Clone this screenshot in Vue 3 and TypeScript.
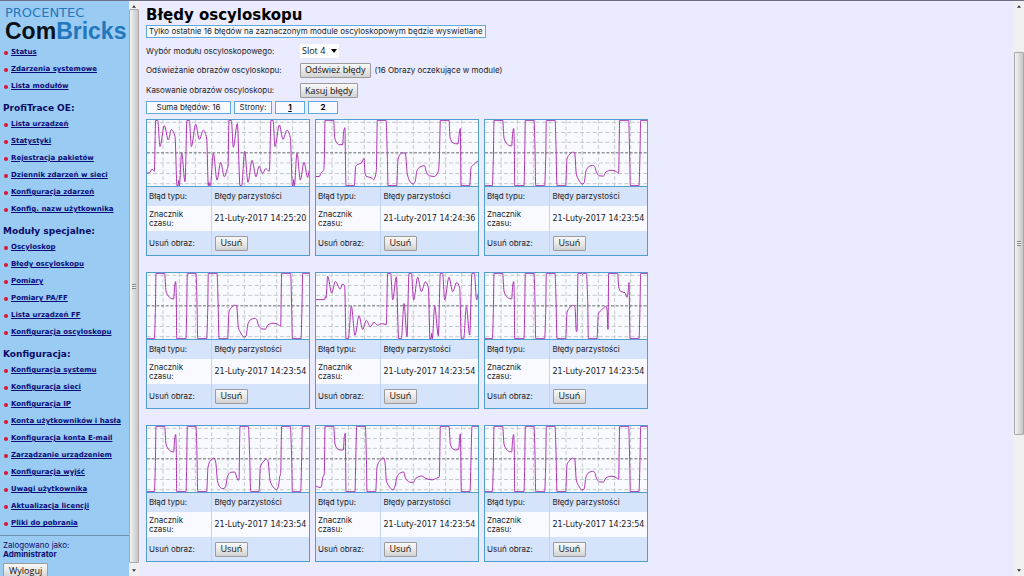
<script setup lang="ts">
import { ref } from 'vue'

type Point = [number, number]

interface Section {
  title: string
  links: string[]
}

interface Capture {
  time: string
  trace: Point[]
}

const sections: Section[] = [
  { title: '', links: ['Status', 'Zdarzenia systemowe', 'Lista modułów'] },
  {
    title: 'ProfiTrace OE:',
    links: ['Lista urządzeń', 'Statystyki', 'Rejestracja pakietów', 'Dziennik zdarzeń w sieci', 'Konfiguracja zdarzeń', 'Konfig. nazw użytkownika'],
  },
  {
    title: 'Moduły specjalne:',
    links: ['Oscyloskop', 'Błędy oscyloskopu', 'Pomiary', 'Pomiary PA/FF', 'Lista urządzeń FF', 'Konfiguracja oscyloskopu'],
  },
  {
    title: 'Konfiguracja:',
    links: ['Konfiguracja systemu', 'Konfiguracja sieci', 'Konfiguracja IP', 'Konta użytkowników i hasła', 'Konfiguracja konta E-mail', 'Zarządzanie urządzeniem', 'Konfiguracja wyjść', 'Uwagi użytkownika', 'Aktualizacja licencji', 'Pliki do pobrania'],
  },
]

const slot = ref('Slot 4')

// Trace samples: x runs 0..486, y runs 0 (top) .. 201 (bottom).
const ringing: Point[] = [
  [0, 161], [7, 161], [15, 150], [22, 156], [26, 1], [32, 1], [39, 81], [52, 17], [64, 61], [73, 29], [84, 50], [90, 200], [93, 200], [95, 184], [97, 200],
  [104, 100], [114, 188], [120, 1], [127, 1], [133, 81], [146, 13], [157, 59], [169, 31], [179, 55], [184, 200], [186, 190], [188, 200], [190, 200],
  [199, 101], [210, 183], [221, 129], [232, 173], [241, 148], [243, 140], [246, 1], [253, 1], [259, 83], [271, 11], [279, 200], [284, 200],
  [293, 95], [303, 190], [315, 123], [327, 173], [336, 141], [347, 163], [356, 148], [367, 156], [372, 1], [378, 1], [384, 81],
  [397, 15], [408, 59], [420, 31], [430, 53], [436, 200], [438, 200], [440, 182], [442, 200], [450, 101], [460, 183], [471, 129], [482, 175], [487, 153],
]

const stepped: Point[] = [
  [0, 172], [10, 172], [15, 161], [23, 154], [25, 120], [27, 1], [53, 1], [56, 53], [62, 69], [68, 75], [80, 75], [83, 35], [87, 23],
  [88, 100], [90, 200], [115, 200], [119, 142], [124, 136], [136, 131], [144, 117], [147, 160], [150, 171], [166, 176], [173, 182],
  [181, 154], [184, 1], [210, 1], [214, 110], [216, 200], [242, 200], [246, 120], [253, 104], [260, 100], [268, 101], [274, 165],
  [281, 186], [291, 195], [297, 189], [303, 154], [312, 143], [325, 139], [332, 161], [341, 170], [355, 172], [367, 156], [370, 120],
  [373, 1], [399, 1], [402, 53], [410, 69], [426, 73], [430, 40], [433, 26], [435, 200], [461, 200], [465, 145], [474, 135], [487, 125],
]

const opening: Point[] = [
  [0, 200], [22, 200], [25, 120], [27, 1], [53, 1], [57, 55], [64, 70], [73, 78], [80, 79], [83, 40], [86, 26], [88, 80], [89, 200],
  [117, 200], [119, 120], [121, 1], [147, 1], [150, 90], [152, 200],
]

const decaying: Point[] = [
  ...opening, [179, 200], [182, 120], [184, 1], [210, 1], [213, 80], [216, 200], [242, 200], [246, 118], [253, 106], [262, 98],
  [269, 100], [274, 165], [281, 182], [291, 195], [297, 193], [303, 155], [311, 142], [323, 138], [329, 141], [334, 158], [343, 170],
  [355, 171], [363, 158], [378, 153], [390, 155], [401, 162], [404, 1], [431, 1], [434, 110], [436, 200], [462, 200], [465, 100], [467, 1], [487, 1],
]

const burst: Point[] = [
  [0, 81], [26, 81], [28, 72], [30, 76], [35, 10], [47, 61], [58, 26], [73, 49], [79, 34], [86, 38], [90, 200], [97, 200],
  [106, 101], [117, 190], [129, 130], [140, 172], [151, 144], [163, 164], [174, 150], [185, 159], [197, 154], [211, 157], [215, 1], [224, 1],
  [230, 82], [241, 12], [248, 200], [256, 200], [264, 93], [273, 194], [279, 1], [286, 1], [293, 82], [305, 13], [316, 57], [328, 27],
  [337, 44], [342, 200], [345, 200], [347, 184], [349, 200], [356, 101], [367, 191], [373, 1], [380, 1], [386, 82], [399, 13], [410, 57], [422, 29],
  [431, 45], [436, 200], [443, 200], [451, 102], [461, 189], [468, 1], [475, 1], [482, 82], [487, 62],
]

const twinSpike: Point[] = [
  ...opening, [179, 200], [182, 120], [184, 1], [210, 1], [213, 80], [216, 200], [242, 200], [246, 120], [253, 107], [263, 98],
  [270, 104], [274, 178], [276, 178], [279, 1], [290, 1], [293, 5], [296, 1], [304, 1], [308, 80], [310, 200], [336, 200], [340, 125],
  [348, 114], [363, 102], [366, 110], [369, 172], [371, 1], [398, 1], [401, 42], [407, 56], [420, 60], [426, 74], [430, 50],
  [432, 29], [435, 200], [462, 200], [465, 100], [467, 1], [487, 1],
]

const doubleBump: Point[] = [
  ...opening, [179, 200], [183, 125], [190, 106], [201, 98], [206, 110], [212, 170], [218, 185], [227, 191], [235, 187],
  [242, 152], [251, 141], [263, 140], [269, 156], [273, 165], [276, 164], [279, 1], [304, 1], [308, 90], [311, 200], [336, 200],
  [340, 125], [348, 110], [358, 101], [363, 106], [369, 165], [376, 182], [389, 194], [395, 180], [398, 155], [401, 145],
  [404, 1], [430, 1], [434, 100], [436, 200], [461, 200], [464, 100], [466, 1], [487, 1],
]

const longTail: Point[] = [
  [0, 183], [9, 187], [16, 186], [20, 158], [25, 145], [27, 1], [53, 1], [57, 55], [64, 69], [72, 73], [82, 73], [85, 32], [88, 22],
  [90, 200], [117, 200], [119, 120], [122, 1], [148, 1], [151, 90], [153, 200], [179, 200], [183, 125], [190, 108], [203, 97],
  [207, 110], [211, 165], [218, 182], [231, 195], [237, 183], [243, 155], [252, 143], [263, 140], [269, 160], [281, 171],
  [291, 172], [300, 159], [317, 152], [330, 160], [348, 164], [362, 159], [370, 155], [373, 1], [399, 1], [403, 55], [410, 69],
  [418, 73], [428, 71], [431, 35], [433, 24], [436, 200], [462, 200], [465, 100], [468, 1], [487, 1],
]

const captures: Capture[] = [
  { time: '21-Luty-2017 14:25:20', trace: ringing },
  { time: '21-Luty-2017 14:24:36', trace: stepped },
  { time: '21-Luty-2017 14:23:54', trace: decaying },
  { time: '21-Luty-2017 14:23:54', trace: decaying },
  { time: '21-Luty-2017 14:23:54', trace: burst },
  { time: '21-Luty-2017 14:23:54', trace: twinSpike },
  { time: '21-Luty-2017 14:23:54', trace: doubleBump },
  { time: '21-Luty-2017 14:23:54', trace: longTail },
  { time: '21-Luty-2017 14:23:54', trace: decaying },
]

// Monotone cubic interpolation keeps peaks rounded without overshooting.
function curve(points: Point[]): string {
  const slopes = points.slice(1).map((p, i) => (p[1] - points[i][1]) / (p[0] - points[i][0]))
  const tangents = points.map((_, i) => {
    const a = slopes[i - 1]
    const b = slopes[i]
    if (a === undefined || b === undefined || a * b <= 0) return 0
    return (2 * a * b) / (a + b)
  })
  let d = `M${points[0][0]} ${points[0][1]}`
  for (let i = 1; i < points.length; i++) {
    const [x0, y0] = points[i - 1]
    const [x1, y1] = points[i]
    const h = (x1 - x0) / 3
    d += `C${x0 + h} ${y0 + tangents[i - 1] * h} ${x1 - h} ${y1 - tangents[i] * h} ${x1} ${y1}`
  }
  return d
}

const columns = [48, 97, 145, 194, 243, 292, 340, 389, 437]
const rows = [7, 38, 68, 131, 163, 194]
</script>

<template>
  <div class="page">
    <aside class="side">
      <div class="logo">
        <div class="brand">PROCENTEC</div>
        <div class="product">Com<span>Bricks</span></div>
      </div>
      <nav>
        <section v-for="s in sections" :key="s.title">
          <h2 v-if="s.title">{{ s.title }}</h2>
          <ul>
            <li v-for="l in s.links" :key="l"><a href="#">{{ l }}</a></li>
          </ul>
        </section>
      </nav>
      <div class="login">
        <div>Zalogowano jako:</div>
        <strong>Administrator</strong>
        <button type="button">Wyloguj</button>
      </div>
    </aside>

    <div class="bar side-bar" aria-hidden="true">
      <svg class="arrow" viewBox="0 0 6 4"><path d="M0 4L3 0L6 4Z" /></svg>
      <div class="track"><div class="thumb"><i></i></div></div>
      <svg class="arrow" viewBox="0 0 6 4"><path d="M0 0L3 4L6 0Z" /></svg>
    </div>

    <main>
      <h1>Błędy oscyloskopu</h1>
      <p class="info">Tylko ostatnie 16 błędów na zaznaczonym module oscyloskopowym będzie wyswietlane</p>
      <form class="controls" @submit.prevent>
        <label for="slot">Wybór modułu oscyloskopowego:</label>
        <div>
          <span class="select">
            <select id="slot" v-model="slot"><option>Slot 4</option></select>
            <svg viewBox="0 0 6 4"><path d="M0 0L3 4L6 0Z" /></svg>
          </span>
        </div>
        <label for="refresh">Odświeżanie obrazów oscyloskopu:</label>
        <div><button id="refresh" type="button">Odśwież błędy</button><span class="note">(16 Obrazy oczekujące w module)</span></div>
        <label for="clear">Kasowanie obrazów oscyloskopu:</label>
        <div><button id="clear" type="button">Kasuj błędy</button></div>
      </form>
      <div class="pager">
        <span class="total">Suma błędów: 16</span>
        <span class="pages">Strony:</span>
        <a class="num" href="#">1</a>
        <b class="num">2</b>
      </div>
      <div class="cards">
        <article v-for="(c, i) in captures" :key="i" class="card">
          <svg class="chart" viewBox="0 0 486 201" preserveAspectRatio="none">
            <g class="grid">
              <path v-for="x in columns" :key="'x' + x" :d="`M${x} 0V201`" />
              <path v-for="y in rows" :key="'y' + y" :d="`M0 ${y}H486`" />
            </g>
            <path class="axis" d="M0 100H486" />
            <path class="trace" :d="curve(c.trace)" />
          </svg>
          <table>
            <tbody>
              <tr><th scope="row">Błąd typu:</th><td>Błędy parzystości</td></tr>
              <tr class="stamp"><th scope="row">Znacznik czasu:</th><td>{{ c.time }}</td></tr>
              <tr class="remove"><th scope="row">Usuń obraz:</th><td><button type="button">Usuń</button></td></tr>
            </tbody>
          </table>
        </article>
      </div>
    </main>

    <div class="bar main-bar" aria-hidden="true">
      <svg class="arrow" viewBox="0 0 6 4"><path d="M0 4L3 0L6 4Z" /></svg>
      <div class="track"><div class="thumb"><i></i></div></div>
      <svg class="arrow" viewBox="0 0 6 4"><path d="M0 0L3 4L6 0Z" /></svg>
    </div>
  </div>
</template>

<style>
body {
  margin: 0;
  overflow: hidden;
}
</style>

<style scoped>
* {
  box-sizing: border-box;
}
.page {
  display: flex;
  height: 100vh;
  overflow: hidden;
  border-top: 1px solid #6c6e82;
  background: #eaebfe;
  color: #1c1c28;
  font: 8px/9px Inter, Verdana, sans-serif;
}
.side {
  flex: none;
  width: 129px;
  overflow: hidden;
  background: #99cbf3;
  color: #10106e;
}
.logo {
  height: 43px;
  padding: 5px 0 0 5px;
  white-space: nowrap;
}
.brand {
  color: #2479bd;
  font: 13px/14px "DejaVu Sans", Verdana, sans-serif;
}
.product {
  color: #0c1018;
  font: bold 23px/23px "Liberation Sans", Arial, sans-serif;
}
.product span {
  color: #2377bd;
}
h2 {
  margin: 0;
  padding: 5px 0 0 3px;
  font: bold 9px/16px "DejaVu Sans", Verdana, sans-serif;
  color: #0b0b66;
}
ul {
  margin: 0;
  padding: 0;
  list-style: none;
}
li {
  display: flex;
  align-items: center;
  height: 17px;
  padding-left: 4px;
  white-space: nowrap;
}
li::before {
  content: "";
  width: 4px;
  height: 4px;
  margin-right: 3px;
  border-radius: 50%;
  background: #e01230;
}
li a {
  color: #0b0b78;
  font: bold 7px/9px "DejaVu Sans", Verdana, sans-serif;
}
.login {
  display: flex;
  flex-direction: column;
  align-items: flex-start;
  margin-top: 3px;
  padding: 5px 0 0 3px;
  border-top: 1px solid #6b8fb0;
}
.login button {
  margin-top: 4px;
}
button {
  height: 15px;
  padding: 0 5px;
  border: 1px solid #9c9c9c;
  border-radius: 1px;
  background: linear-gradient(#f8f8f8, #e8e8e8 50%, #d2d2d2);
  color: #101010;
  font: 9px/12px "Open Sans", Tahoma, sans-serif;
  white-space: nowrap;
}
.controls button {
  padding: 0 4px;
}
.bar {
  flex: none;
  display: flex;
  flex-direction: column;
  align-items: center;
  width: 10px;
  padding: 4px 0;
  background: #f0f0f2;
}
.arrow {
  flex: none;
  width: 4px;
  height: 3px;
  fill: #333;
}
.track {
  display: flex;
  flex-direction: column;
  flex: 1;
  width: 100%;
}
.thumb {
  display: flex;
  align-items: center;
  justify-content: center;
  border: 1px solid #a8a8ac;
  border-radius: 1px;
  background: linear-gradient(90deg, #f4f4f4, #dcdcdc 50%, #c6c6c8);
}
.thumb i {
  width: 4px;
  height: 5px;
  background: repeating-linear-gradient(#888 0 1px, #eee 1px 2px);
}
.side-bar .thumb {
  flex: 1;
  margin: 1px 0 6px;
}
.main-bar .track {
  padding: 44px 0 0;
}
.main-bar .thumb {
  height: 74%;
}
main {
  flex: 1;
  min-width: 0;
  padding: 4px 7px 0 7px;
  overflow: hidden;
}
h1 {
  margin: 0;
  color: #000;
  font: bold 15px/20px "DejaVu Sans", Verdana, sans-serif;
}
.info {
  width: fit-content;
  margin: 0;
  padding: 1px 2px;
  border: 1px solid #5fa9dc;
  background: #f8faff;
}
.controls {
  display: grid;
  grid-template-columns: 154px 1fr;
  grid-template-rows: 18px 20px 21px;
  align-items: center;
  margin-top: 4px;
}
.controls > div {
  display: flex;
  align-items: center;
}
.note {
  margin-left: 4px;
}
.select {
  display: grid;
  align-items: center;
}
.select select {
  grid-area: 1 / 1;
  width: 39px;
  height: 14px;
  padding: 0 2px;
  border: 0;
  background: #fff;
  color: #101010;
  appearance: none;
  font: 9px/12px "Open Sans", Tahoma, sans-serif;
}
.select svg {
  grid-area: 1 / 1;
  justify-self: end;
  width: 6px;
  height: 4px;
  margin-right: 2px;
  pointer-events: none;
}
.pager {
  display: flex;
  gap: 3px;
  margin-bottom: 5px;
}
.pager > * {
  padding: 1px 4px;
  border: 1px solid #5fa9dc;
  background: #f8faff;
  text-align: center;
}
.pager .total {
  width: 85px;
}
.pager .pages {
  width: 38px;
}
.pager .num {
  width: 30px;
  color: #000;
  font-weight: bold;
}
.cards {
  display: grid;
  grid-template-columns: repeat(auto-fill, 164px);
  gap: 16px 5px;
  max-width: 510px;
}
.card {
  border: 1px solid #4f9fd0;
  background: #d6e4fb;
}
.chart {
  display: block;
  width: 100%;
  height: 67px;
  border-bottom: 1px solid #4f9fd0;
  background: #f9faff;
}
.chart path {
  fill: none;
}
.grid path {
  stroke: #c3cbc9;
  stroke-width: 3;
  stroke-dasharray: 12 7;
}
.chart .axis {
  stroke: #666c6c;
  stroke-width: 3;
  stroke-dasharray: 9 5;
}
.chart .trace {
  stroke: #ac30b2;
  stroke-width: 3;
  stroke-linejoin: round;
}
table {
  width: 100%;
  border-collapse: collapse;
  table-layout: fixed;
}
th,
td {
  height: 19px;
  padding: 0 2px;
  font-weight: normal;
  text-align: left;
}
th {
  width: 64px;
  padding-right: 20px;
  border-right: 1px solid #bcd6f2;
}
tr:not(.stamp) th {
  padding-right: 0;
}
td {
  padding-left: 3px;
  white-space: nowrap;
}
.stamp {
  background: #f8faff;
}
.stamp > * {
  height: 25px;
}
.stamp td {
  font-family: "DejaVu Sans", Verdana, sans-serif;
}
.remove > * {
  height: 24px;
}
td button {
  display: block;
}
</style>
